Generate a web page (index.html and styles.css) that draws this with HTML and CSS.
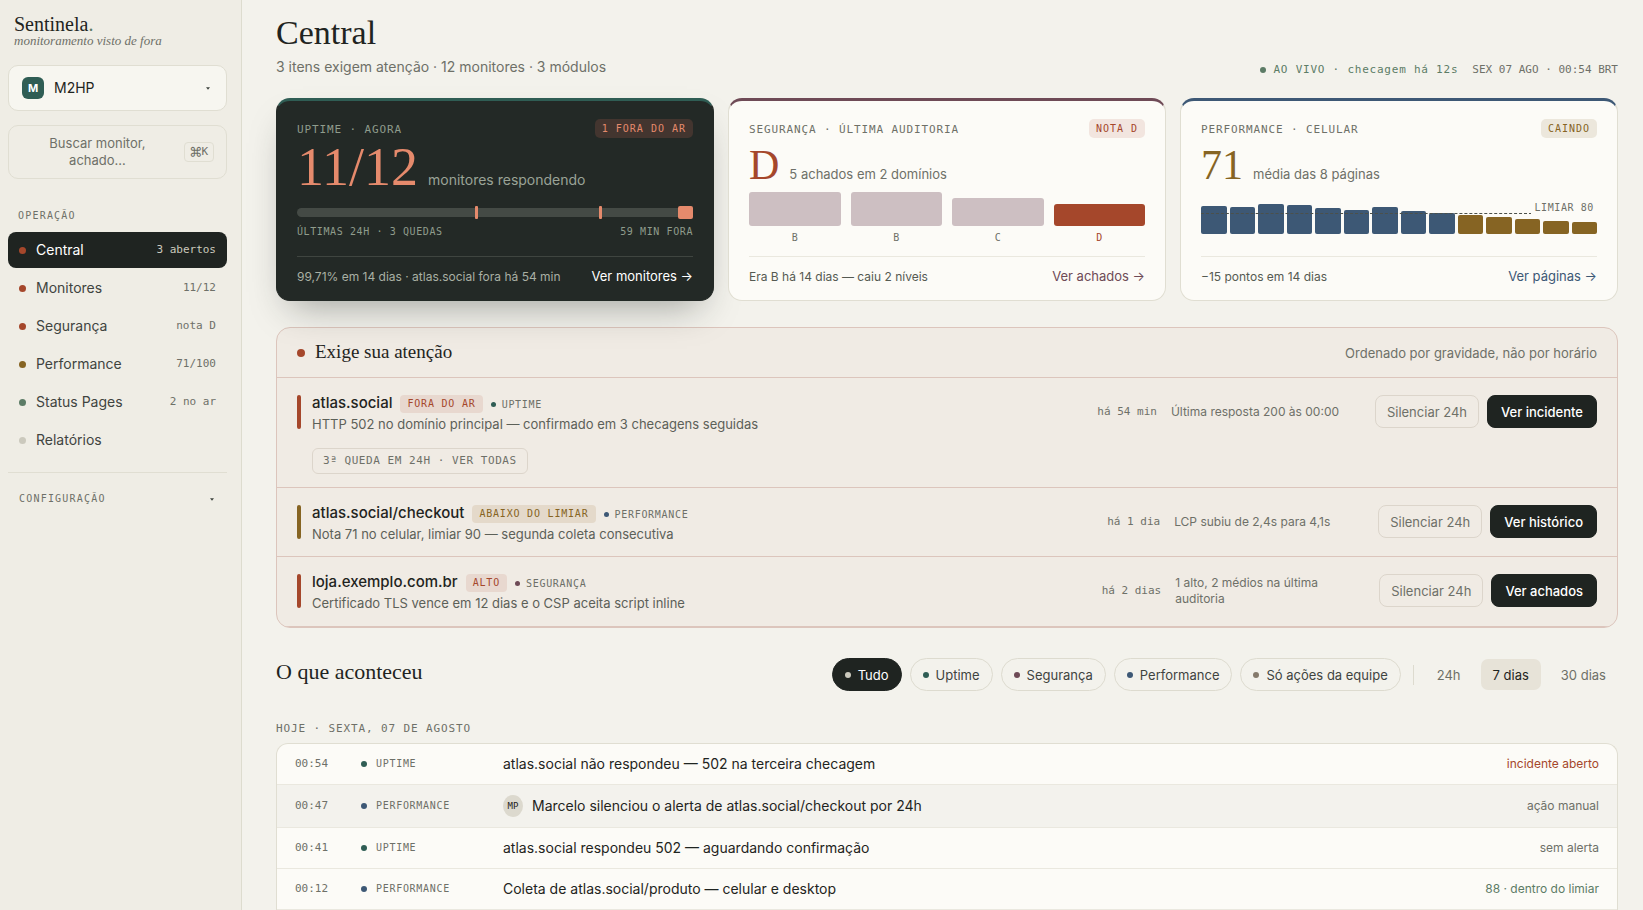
FILE: index.html
```html
<!DOCTYPE html>
<html lang="pt-BR">
<head>
<meta charset="utf-8">
<meta name="viewport" content="width=device-width, initial-scale=1">
<title>Sentinela — Central</title>
<link rel="stylesheet" href="styles.css">
</head>
<body>
<div class="app">
  <aside class="sidebar">
    <div class="brand">
      <div class="brand-name">Sentinela<span class="brand-stop">.</span></div>
      <div class="brand-tag">monitoramento visto de fora</div>
    </div>
    <button class="switcher" type="button">
      <span class="org-badge">M</span>
      <span class="org-name">M2HP</span>
      <svg class="caret" viewBox="0 0 5 3" aria-hidden="true"><path d="M0 0h5L2.500 3z"/></svg>
    </button>
    <button class="search" type="button">
      <span class="search-text">Buscar monitor, achado…</span>
      <kbd class="kbd"><span class="kbd-cmd">⌘</span>K</kbd>
    </button>
    <div class="nav-title">Operação</div>
    <nav class="nav">
      <a class="nav-item active" href="#central"><i class="dot rust"></i><span class="nav-label">Central</span><span class="nav-meta">3 abertos</span></a>
      <a class="nav-item" href="#monitores"><i class="dot rust"></i><span class="nav-label">Monitores</span><span class="nav-meta">11/12</span></a>
      <a class="nav-item" href="#seguranca"><i class="dot rust"></i><span class="nav-label">Segurança</span><span class="nav-meta">nota D</span></a>
      <a class="nav-item" href="#performance"><i class="dot ochre"></i><span class="nav-label">Performance</span><span class="nav-meta">71/100</span></a>
      <a class="nav-item" href="#status"><i class="dot green"></i><span class="nav-label">Status Pages</span><span class="nav-meta">2 no ar</span></a>
      <a class="nav-item" href="#relatorios"><i class="dot sand"></i><span class="nav-label">Relatórios</span></a>
    </nav>
    <button class="config" type="button">Configuração
      <svg class="caret" viewBox="0 0 5 3" aria-hidden="true"><path d="M0 0h5L2.500 3z"/></svg>
    </button>
  </aside>

  <main class="main">
    <header class="page-head">
      <div>
        <h1 class="page-title">Central</h1>
        <p class="page-sub">3 itens exigem atenção · 12 monitores · 3 módulos</p>
      </div>
      <div class="live">
        <span class="live-now"><i class="dot small green"></i>AO VIVO · checagem há 12s</span>
        <time>SEX 07 AGO · 00:54 BRT</time>
      </div>
    </header>

    <section class="cards">
      <article class="card card-uptime">
        <div class="card-head"><h2 class="eyebrow">Uptime · Agora</h2><span class="badge">1 FORA DO AR</span></div>
        <div class="metric metric-lg"><strong class="metric-value">11/12</strong><span class="metric-note">monitores respondendo</span></div>
        <div class="track"><i class="mark" style="left:45%"></i><i class="mark" style="left:76.3%"></i><i class="mark mark-now"></i></div>
        <div class="track-legend"><span>ÚLTIMAS 24H · 3 QUEDAS</span><span>59 MIN FORA</span></div>
        <footer class="card-foot"><span>99,71% em 14 dias · atlas.social fora há 54 min</span><a class="card-link" href="#monitores">Ver monitores →</a></footer>
      </article>

      <article class="card card-security">
        <div class="card-head"><h2 class="eyebrow">Segurança · Última auditoria</h2><span class="badge">NOTA D</span></div>
        <div class="metric"><strong class="metric-value">D</strong><span class="metric-note">5 achados em 2 domínios</span></div>
        <div class="grades">
          <div class="grade"><i class="grade-bar" style="height:34px"></i>B</div>
          <div class="grade"><i class="grade-bar" style="height:34px"></i>B</div>
          <div class="grade"><i class="grade-bar" style="height:28px"></i>C</div>
          <div class="grade grade-bad"><i class="grade-bar" style="height:22px"></i>D</div>
        </div>
        <footer class="card-foot"><span>Era B há 14 dias — caiu 2 níveis</span><a class="card-link" href="#seguranca">Ver achados →</a></footer>
      </article>

      <article class="card card-perf">
        <div class="card-head"><h2 class="eyebrow">Performance · Celular</h2><span class="badge">CAINDO</span></div>
        <div class="metric"><strong class="metric-value">71</strong><span class="metric-note">média das 8 páginas</span></div>
        <div class="chart">
          <i class="bar" style="height:28px"></i><i class="bar" style="height:27px"></i><i class="bar" style="height:30px"></i><i class="bar" style="height:29px"></i><i class="bar" style="height:26px"></i><i class="bar" style="height:24px"></i><i class="bar" style="height:27px"></i><i class="bar" style="height:23px"></i><i class="bar" style="height:21px"></i><i class="bar low" style="height:19px"></i><i class="bar low" style="height:17px"></i><i class="bar low" style="height:15px"></i><i class="bar low" style="height:13px"></i><i class="bar low" style="height:12px"></i>
          <div class="limit"></div><span class="limit-label">LIMIAR 80</span>
        </div>
        <footer class="card-foot"><span>−15 pontos em 14 dias</span><a class="card-link" href="#performance">Ver páginas →</a></footer>
      </article>
    </section>

    <section class="attention">
      <header class="attention-head"><i class="dot large rust"></i><h2 class="attention-title">Exige sua atenção</h2><span class="attention-hint">Ordenado por gravidade, não por horário</span></header>
      <article class="issue">
        <i class="severity rust"></i>
        <div class="issue-body">
          <div class="issue-top"><h3 class="issue-name">atlas.social</h3><span class="tag tag-rust">FORA DO AR</span><span class="module"><i class="dot tiny teal"></i>UPTIME</span></div>
          <p class="issue-desc">HTTP 502 no domínio principal — confirmado em 3 checagens seguidas</p>
          <button class="history" type="button">3ª QUEDA EM 24H · VER TODAS</button>
        </div>
        <div class="issue-side"><time class="when">há 54 min</time><span class="note">Última resposta 200 às 00:00</span><div class="actions"><button class="btn" type="button">Silenciar 24h</button><button class="btn btn-dark" type="button">Ver incidente</button></div></div>
      </article>
      <article class="issue">
        <i class="severity ochre"></i>
        <div class="issue-body">
          <div class="issue-top"><h3 class="issue-name">atlas.social/checkout</h3><span class="tag tag-ochre">ABAIXO DO LIMIAR</span><span class="module"><i class="dot tiny blue"></i>PERFORMANCE</span></div>
          <p class="issue-desc">Nota 71 no celular, limiar 90 — segunda coleta consecutiva</p>
        </div>
        <div class="issue-side"><time class="when">há 1 dia</time><span class="note">LCP subiu de 2,4s para 4,1s</span><div class="actions"><button class="btn" type="button">Silenciar 24h</button><button class="btn btn-dark" type="button">Ver histórico</button></div></div>
      </article>
      <article class="issue">
        <i class="severity rust"></i>
        <div class="issue-body">
          <div class="issue-top"><h3 class="issue-name">loja.exemplo.com.br</h3><span class="tag tag-rust">ALTO</span><span class="module"><i class="dot tiny plum"></i>SEGURANÇA</span></div>
          <p class="issue-desc">Certificado TLS vence em 12 dias e o CSP aceita script inline</p>
        </div>
        <div class="issue-side"><time class="when">há 2 dias</time><span class="note">1 alto, 2 médios na última auditoria</span><div class="actions"><button class="btn" type="button">Silenciar 24h</button><button class="btn btn-dark" type="button">Ver achados</button></div></div>
      </article>
    </section>

    <section class="timeline">
      <header class="timeline-head">
        <h2 class="timeline-title">O que aconteceu</h2>
        <div class="chips">
          <button class="chip chip-on" type="button"><i class="dot small sand"></i>Tudo</button>
          <button class="chip" type="button"><i class="dot small teal"></i>Uptime</button>
          <button class="chip" type="button"><i class="dot small plum"></i>Segurança</button>
          <button class="chip" type="button"><i class="dot small blue"></i>Performance</button>
          <button class="chip" type="button"><i class="dot small stone"></i>Só ações da equipe</button>
        </div>
        <div class="ranges">
          <button class="range" type="button">24h</button>
          <button class="range range-on" type="button">7 dias</button>
          <button class="range" type="button">30 dias</button>
        </div>
      </header>
      <h3 class="day">Hoje · Sexta, 07 de agosto</h3>
      <ul class="events">
        <li class="event"><time class="event-time">00:54</time><span class="event-module"><i class="dot small teal"></i>UPTIME</span><span class="event-text">atlas.social não respondeu — 502 na terceira checagem</span><span class="event-result bad">incidente aberto</span></li>
        <li class="event event-manual"><time class="event-time">00:47</time><span class="event-module"><i class="dot small blue"></i>PERFORMANCE</span><span class="event-text"><span class="avatar">MP</span>Marcelo silenciou o alerta de atlas.social/checkout por 24h</span><span class="event-result">ação manual</span></li>
        <li class="event"><time class="event-time">00:41</time><span class="event-module"><i class="dot small teal"></i>UPTIME</span><span class="event-text">atlas.social respondeu 502 — aguardando confirmação</span><span class="event-result">sem alerta</span></li>
        <li class="event"><time class="event-time">00:12</time><span class="event-module"><i class="dot small blue"></i>PERFORMANCE</span><span class="event-text">Coleta de atlas.social/produto — celular e desktop</span><span class="event-result good">88 · dentro do limiar</span></li>
      </ul>
    </section>
  </main>
</div>
</body>
</html>
```
FILE: styles.css
```css
:root {
  --sans: Inter, "Liberation Sans", sans-serif;
  --serif: "Liberation Serif", serif;
  --mono: "DejaVu Sans Mono", "Liberation Mono", monospace;
  --ink: #1f2421;
  --text: #3f443f;
  --muted: #6e7068;
  --line: #e0ded2;
  --paper: #fcfbf7;
  --rust: #a5472b;
  --ochre: #866423;
  --green: #5c7c66;
  --teal: #2f5d54;
  --plum: #6e4a56;
  --blue: #3d5875;
}
* { box-sizing: border-box; }
body { margin: 0; background: #f3f2ec; color: var(--ink); font: 13px/18px var(--sans); }
h1, h2, h3, p, ul { margin: 0; padding: 0; font-weight: 400; }
button { font: inherit; color: inherit; background: none; border: 0; padding: 0; cursor: pointer; }
a { color: inherit; text-decoration: none; }

.app { display: flex; min-height: 100vh; }

.dot { flex: none; display: block; width: 7px; height: 7px; border-radius: 50%; }
.dot.small { width: 6px; height: 6px; }
.dot.tiny { width: 5px; height: 5px; }
.dot.large { width: 8px; height: 8px; }
.rust { background: var(--rust); }
.ochre { background: var(--ochre); }
.green { background: var(--green); }
.teal { background: var(--teal); }
.plum { background: var(--plum); }
.blue { background: var(--blue); }
.sand { background: #cbc9bd; }
.stone { background: #857a6c; }

/* Sidebar */
.sidebar { flex: none; width: 242px; padding: 14px 14px 0 8px; background: #efede5; border-right: 1px solid #dddccf; }
.brand { padding: 0 6px; }
.brand-name { font: 500 20px/20px var(--serif); }
.brand-stop { color: var(--green); }
.brand-tag { font: italic 13px/14px var(--serif); color: var(--muted); }
.switcher { display: flex; align-items: center; gap: 10px; width: 100%; height: 46px; margin-top: 17px; padding: 0 16px 0 13px; border: 1px solid var(--line); border-radius: 10px; background: #f7f6f0; font-size: 14px; }
.org-badge { display: grid; place-items: center; width: 22px; height: 22px; border-radius: 6px; background: var(--teal); color: #fff; font-size: 11px; font-weight: 700; }
.org-name { flex: 1; text-align: left; }
.caret { width: 4px; height: 3px; fill: #3f443f; }
.search { display: flex; align-items: center; gap: 10px; width: 100%; height: 54px; margin-top: 14px; padding: 0 12px; border: 1px solid var(--line); border-radius: 10px; color: var(--muted); line-height: 17px; }
.search-text { flex: 1; padding: 0 10px; text-align: center; }
.kbd { display: flex; align-items: center; height: 20px; padding: 0 5px; border: 1px solid var(--line); border-radius: 4px; color: var(--muted); font: 11px/16px var(--mono); }
.kbd-cmd { font-size: 19px; }
.nav-title, .config { font: 10px/14px var(--mono); letter-spacing: .12em; text-transform: uppercase; color: var(--muted); }
.nav-title { margin: 30px 10px 9px; }
.nav { display: flex; flex-direction: column; gap: 2px; padding-bottom: 14px; border-bottom: 1px solid var(--line); }
.nav-item { display: flex; align-items: center; gap: 10px; height: 36px; padding: 0 11px; border-radius: 8px; font-size: 14px; color: var(--text); }
.nav-label { flex: 1; }
.nav-meta { font: 11px/16px var(--mono); color: var(--muted); }
.nav-item.active { background: var(--ink); color: #fff; }
.active .nav-meta { color: #cbc9bd; }
.config { display: flex; align-items: center; justify-content: space-between; width: 100%; margin-top: 19px; padding: 0 13px 0 11px; }

/* Page header */
.main { flex: 1; min-width: 0; padding: 13px 25px 0 34px; }
.page-head { display: flex; align-items: flex-end; justify-content: space-between; margin-bottom: 21px; }
.page-title { font: 34px/40px var(--serif); }
.page-sub { margin-top: 4px; font-size: 14px; line-height: 20px; color: var(--muted); }
.live { display: flex; gap: 14px; font: 11px/14px var(--mono); color: var(--muted); }
.live-now { display: flex; align-items: center; gap: 7px; color: var(--green); letter-spacing: .07em; }

/* Summary cards */
.cards { display: grid; grid-template-columns: repeat(3, 1fr); gap: 14px; }
.card { display: flex; flex-direction: column; padding: 18px 20px 14px; border: 1px solid var(--line); border-top: 3px solid var(--accent); border-radius: 14px; background: var(--paper); }
.card-uptime { --accent: var(--teal); --value: #e58a6c; border-color: var(--teal) #232926 #232926; background: #232926; box-shadow: 0 18px 36px -14px rgba(31, 36, 33, .4); color: #a9b0a4; }
.card-security { --accent: var(--plum); --value: var(--rust); }
.card-perf { --accent: var(--blue); --value: var(--ochre); }
.card-head { display: flex; align-items: center; justify-content: space-between; height: 19px; }
.eyebrow { padding-top: 2px; font: 11px/16px var(--mono); letter-spacing: .08em; text-transform: uppercase; color: var(--muted); }
.card-uptime .eyebrow, .track-legend { color: #8f9c8c; }
.badge { padding: 0 7px; border-radius: 5px; font: 10px/19px var(--mono); letter-spacing: .1em; color: var(--value); background: #f2e5df; }
.card-uptime .badge { background: #43352f; }
.card-perf .badge { background: #ece7dc; }
.metric { display: flex; align-items: baseline; gap: 10px; margin-top: 6px; }
.metric-value { font: 42px/42px var(--serif); color: var(--value); }
.metric-note { font-size: 13px; line-height: 18px; color: var(--muted); }
.metric-lg { margin-top: 2px; }
.metric-lg .metric-value { font-size: 54px; line-height: 54px; }
.metric-lg .metric-note { font-size: 14px; }
.card-uptime .metric-note { color: #9aa397; }
.track { position: relative; height: 9px; margin-top: 14px; border-radius: 5px; background: #444a45; }
.mark { position: absolute; top: -2px; width: 3px; height: 13px; border-radius: 1px; background: #e58a6c; }
.mark-now { right: 0; width: 15px; border-radius: 2px; }
.track-legend { display: flex; justify-content: space-between; margin: 8px 0 17px; font: 10px/14px var(--mono); letter-spacing: .06em; }
.grades { display: grid; grid-template-columns: repeat(4, 1fr); align-items: end; gap: 10px; margin-top: 6px; font: 10px/14px var(--mono); color: var(--muted); text-align: center; }
.grade-bar { display: block; margin-bottom: 5px; border-radius: 3px; background: #cdbfc2; }
.grade-bad { color: var(--rust); }
.grade-bad .grade-bar { background: var(--rust); }
.chart { position: relative; display: flex; align-items: flex-end; gap: 3px; height: 34px; margin-top: 14px; }
.bar { flex: 1; border-radius: 2px; background: var(--blue); }
.bar.low { background: var(--ochre); }
.limit { position: absolute; left: 0; right: 65px; bottom: 20px; border-top: 1px dashed #4c504a; }
.limit-label { position: absolute; right: 0; bottom: 19px; padding: 0 3px; background: var(--paper); font: 10px/14px var(--mono); letter-spacing: .06em; color: var(--muted); }
.card-foot { display: flex; align-items: baseline; justify-content: space-between; margin-top: auto; padding-top: 10px; border-top: 1px solid #eae8df; font-size: 12px; color: #555a52; }
.card-uptime .card-foot { border-color: #3f4540; color: #a9b0a4; }
.card-link { font-size: 13px; color: var(--accent); }
.card-uptime .card-link { color: #fff; }

/* Attention list */
.attention { margin-top: 26px; border: 1px solid #dcc5bc; border-radius: 14px; background: #f0ebe4; overflow: hidden; }
.attention-head { display: flex; align-items: center; gap: 10px; height: 50px; padding: 0 20px; border-bottom: 1px solid #dcc5bc; }
.attention-title { flex: 1; padding-bottom: 2px; font: 19px/24px var(--serif); }
.attention-hint { color: var(--muted); }
.issue { display: flex; align-items: flex-start; padding: 17px 20px 13px; border-bottom: 1px solid #dcc5bc; }
.issue:last-child { padding-bottom: 14px; }
.severity { flex: none; width: 4px; height: 34px; margin-right: 11px; border-radius: 2px; }
.issue-body { flex: 1; }
.issue-top { display: flex; align-items: center; gap: 8px; height: 18px; }
.issue-name { padding-bottom: 2px; font-size: 15px; font-weight: 500; line-height: 18px; }
.tag { padding: 0 7px; border-radius: 4px; font: 10px/18px var(--mono); letter-spacing: .08em; }
.tag-rust { background: #e8d8cf; color: var(--rust); }
.tag-ochre { background: #e4d9ca; color: var(--ochre); }
.module { display: flex; align-items: center; gap: 6px; padding-top: 1px; font: 10px/18px var(--mono); letter-spacing: .07em; color: var(--muted); }
.issue-desc { margin-top: 2px; line-height: 18px; color: #5c6058; }
.history { height: 26px; margin-top: 15px; padding: 0 10px; border: 1px solid #dcd5cb; border-radius: 6px; font: 11px/16px var(--mono); letter-spacing: .05em; color: var(--muted); }
.issue-side { display: flex; align-items: center; gap: 14px; color: var(--muted); font-size: 12px; line-height: 16px; }
.when { font: 11px/16px var(--mono); }
.note { width: 190px; }
.actions { display: flex; gap: 8px; }
.btn { height: 33px; padding: 0 11px; border: 1px solid #dcd5cb; border-radius: 8px; font-size: 13px; color: var(--muted); white-space: nowrap; }
.btn-dark { padding: 0 13px; border-color: var(--ink); background: var(--ink); color: #fff; font-weight: 500; }

/* Timeline */
.timeline-head { display: flex; align-items: flex-start; margin-top: 30px; }
.timeline-title { flex: 1; font: 22px/28px var(--serif); }
.chips { display: flex; gap: 8px; padding-right: 12px; }
.chip { display: flex; align-items: center; gap: 7px; height: 33px; padding: 0 12px; border: 1px solid #dddbcf; border-radius: 17px; color: var(--text); }
.chip-on { border-color: var(--ink); background: var(--ink); color: #fff; }
.ranges { display: flex; align-items: center; gap: 8px; height: 33px; padding-left: 12px; background: linear-gradient(#dddbcf, #dddbcf) left center / 1px 20px no-repeat; }
.range { height: 31px; padding: 0 12px; border-radius: 7px; color: var(--muted); }
.range-on { background: #e7e3d8; color: var(--ink); }
.day { margin: 31px 0 7px; font: 11px/14px var(--mono); letter-spacing: .08em; text-transform: uppercase; color: var(--muted); }
.events { list-style: none; border: 1px solid var(--line); border-bottom: 0; border-radius: 12px 12px 0 0; background: var(--paper); overflow: hidden; }
.event { display: grid; grid-template-columns: 66px 142px 1fr auto; align-items: center; padding: 10px 18px; border-bottom: 1px solid #eae8df; }
.event-manual { background: #f3f2ed; }
.event-time { font: 11px/16px var(--mono); color: var(--muted); }
.event-module { display: flex; align-items: center; gap: 9px; font: 10px/16px var(--mono); letter-spacing: .07em; color: var(--muted); }
.event-text { display: flex; align-items: center; gap: 9px; font-size: 14px; line-height: 20px; }
.avatar { display: grid; place-items: center; width: 20px; height: 22px; border-radius: 50%; background: #dcd9ce; font: 9px/12px var(--mono); }
.event-result { font-size: 12px; color: var(--muted); }
.bad { color: var(--rust); }
.good { color: var(--green); }
```
